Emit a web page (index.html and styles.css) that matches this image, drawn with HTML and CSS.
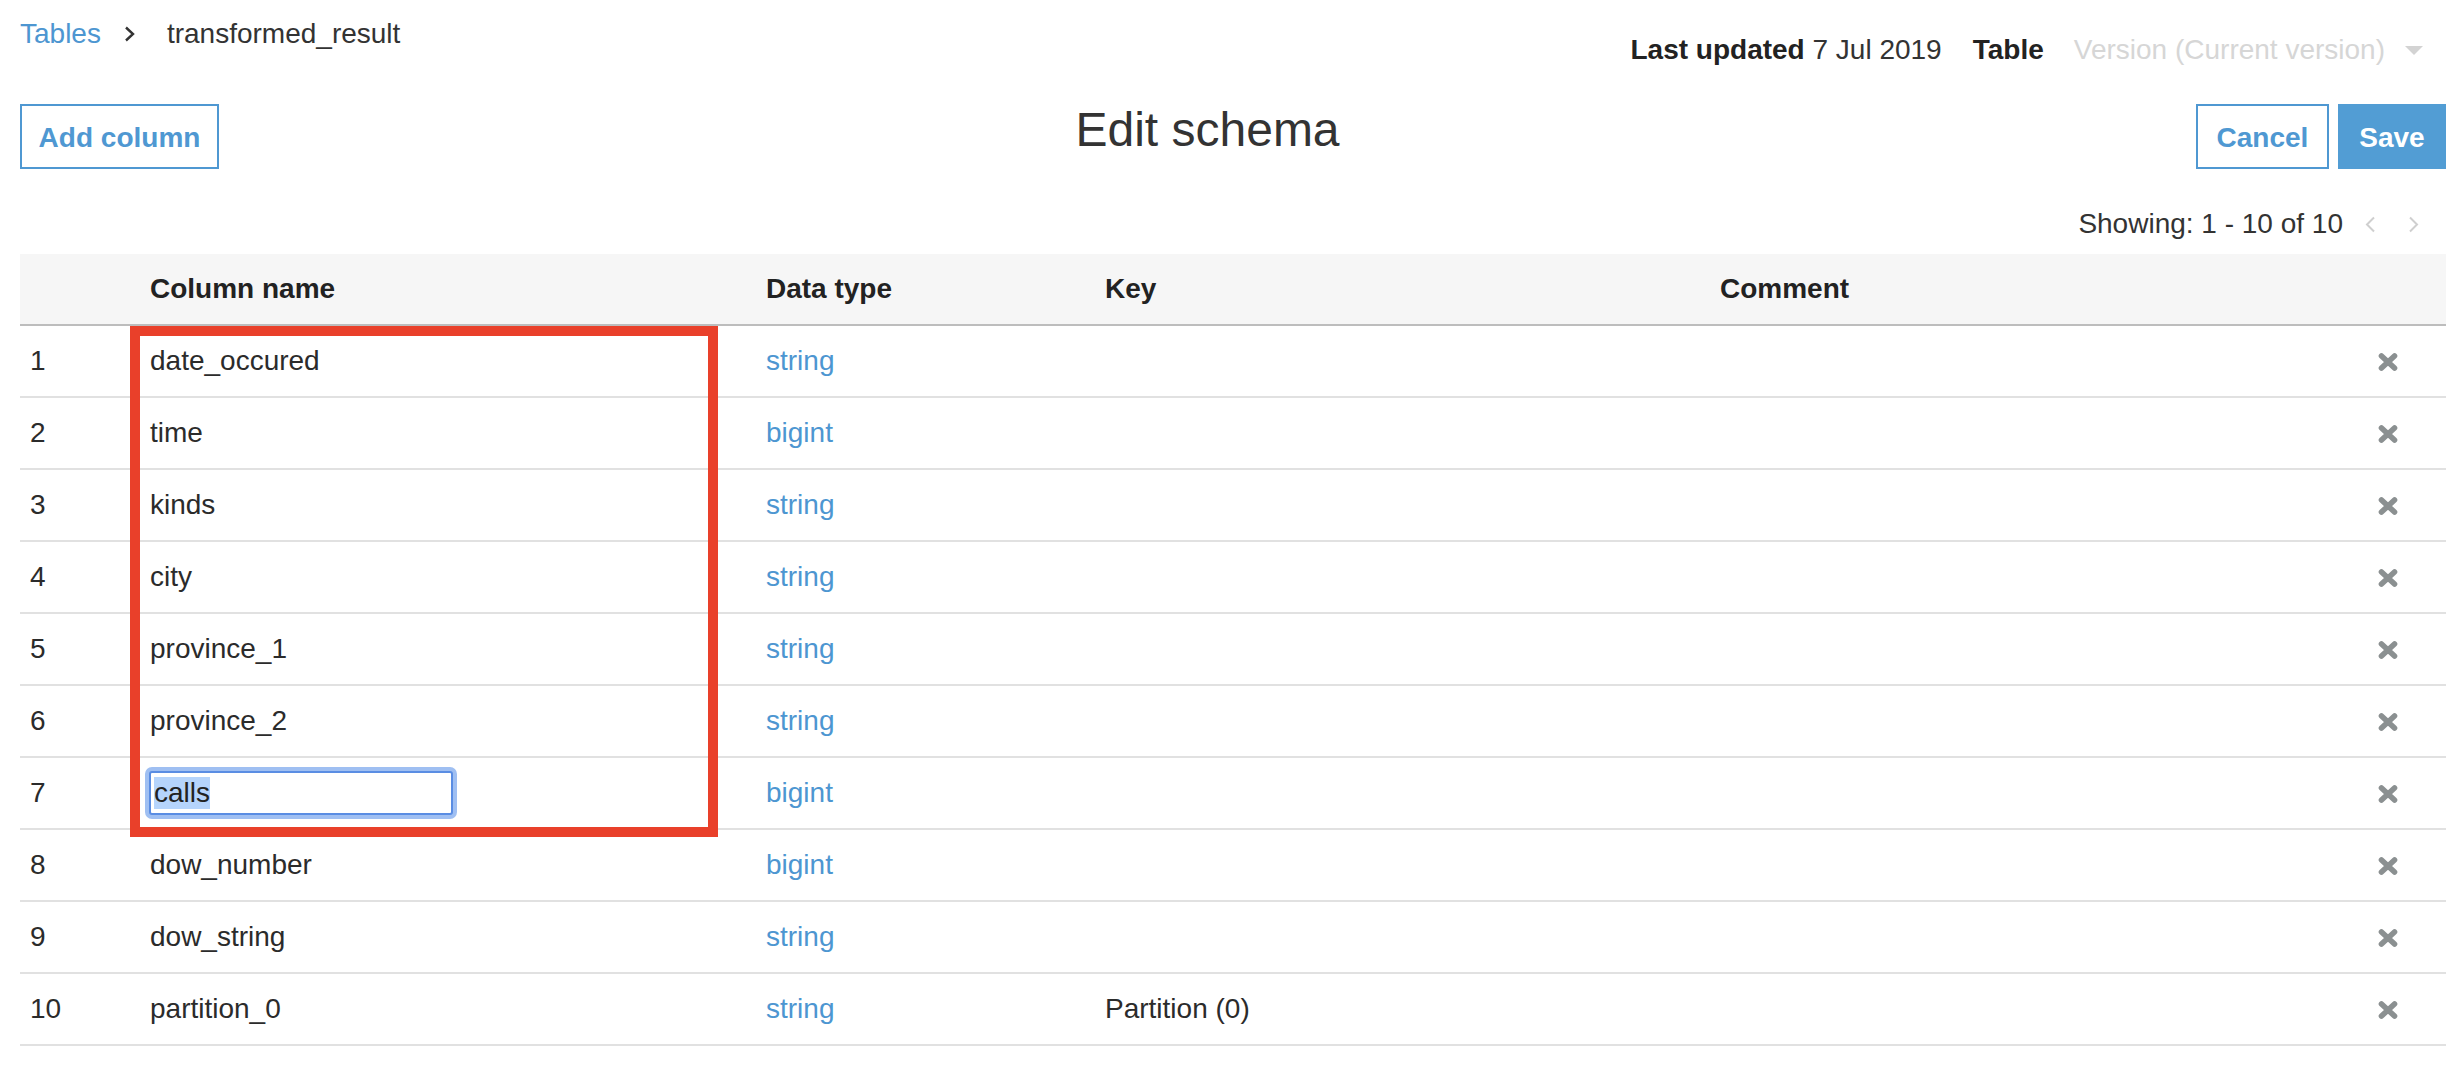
FILE: index.html
```html
<!DOCTYPE html>
<html lang="en">
<head>
<meta charset="utf-8">
<title>Edit schema</title>
<link rel="stylesheet" href="styles.css">
</head>
<body>
<div class="page">
  <header class="topbar">
    <nav class="breadcrumb">
      <a class="crumb-link">Tables</a>
      <svg class="crumb-sep" width="11" height="16" viewBox="0 0 11 16"><polyline points="2,1.5 9,8 2,14.5" fill="none" stroke="#333" stroke-width="2.4"/></svg>
      <span class="crumb-current">transformed_result</span>
    </nav>
    <div class="meta">
      <span class="meta-updated"><b>Last updated</b> 7 Jul 2019</span>
      <b class="meta-table">Table</b>
      <span class="meta-version">Version (Current version)</span>
      <svg class="meta-caret" width="18" height="9" viewBox="0 0 18 9"><polygon points="0,0 18,0 9,9" fill="#d3d3d3"/></svg>
    </div>
  </header>

  <div class="toolbar">
    <div class="tb-group">
      <button class="btn btn-outline btn-add">Add column</button>
    </div>
    <h1 class="title">Edit schema</h1>
    <div class="tb-group tb-right">
      <button class="btn btn-outline btn-cancel">Cancel</button>
      <button class="btn btn-primary btn-save">Save</button>
    </div>
  </div>

  <div class="pager">
    <span class="pager-text">Showing: 1 - 10 of 10</span>
    <svg class="pager-prev" width="12" height="17" viewBox="0 0 12 17"><polyline points="10,1.5 3,8.5 10,15.5" fill="none" stroke="#cfcfcf" stroke-width="2"/></svg>
    <svg class="pager-next" width="12" height="17" viewBox="0 0 12 17"><polyline points="2,1.5 9,8.5 2,15.5" fill="none" stroke="#cfcfcf" stroke-width="2"/></svg>
  </div>

  <div class="table-wrap">
    <table class="schema">
      <colgroup>
        <col class="c-num"><col class="c-name"><col class="c-type"><col class="c-key"><col class="c-comment"><col class="c-del">
      </colgroup>
      <thead>
        <tr><th></th><th>Column name</th><th>Data type</th><th>Key</th><th>Comment</th><th></th></tr>
      </thead>
      <tbody>
        <tr><td>1</td><td>date_occured</td><td class="type">string</td><td></td><td></td><td class="del"><svg class="x" width="22" height="20" viewBox="0 0 22 20"><path d="M4.5 4 L17.5 16 M17.5 4 L4.5 16" stroke="#8b9091" stroke-width="5.6" stroke-linecap="round"/></svg></td></tr>
        <tr><td>2</td><td>time</td><td class="type">bigint</td><td></td><td></td><td class="del"><svg class="x" width="22" height="20" viewBox="0 0 22 20"><path d="M4.5 4 L17.5 16 M17.5 4 L4.5 16" stroke="#8b9091" stroke-width="5.6" stroke-linecap="round"/></svg></td></tr>
        <tr><td>3</td><td>kinds</td><td class="type">string</td><td></td><td></td><td class="del"><svg class="x" width="22" height="20" viewBox="0 0 22 20"><path d="M4.5 4 L17.5 16 M17.5 4 L4.5 16" stroke="#8b9091" stroke-width="5.6" stroke-linecap="round"/></svg></td></tr>
        <tr><td>4</td><td>city</td><td class="type">string</td><td></td><td></td><td class="del"><svg class="x" width="22" height="20" viewBox="0 0 22 20"><path d="M4.5 4 L17.5 16 M17.5 4 L4.5 16" stroke="#8b9091" stroke-width="5.6" stroke-linecap="round"/></svg></td></tr>
        <tr><td>5</td><td>province_1</td><td class="type">string</td><td></td><td></td><td class="del"><svg class="x" width="22" height="20" viewBox="0 0 22 20"><path d="M4.5 4 L17.5 16 M17.5 4 L4.5 16" stroke="#8b9091" stroke-width="5.6" stroke-linecap="round"/></svg></td></tr>
        <tr><td>6</td><td>province_2</td><td class="type">string</td><td></td><td></td><td class="del"><svg class="x" width="22" height="20" viewBox="0 0 22 20"><path d="M4.5 4 L17.5 16 M17.5 4 L4.5 16" stroke="#8b9091" stroke-width="5.6" stroke-linecap="round"/></svg></td></tr>
        <tr><td>7</td><td><div class="edit-input"><span class="sel">calls</span></div></td><td class="type">bigint</td><td></td><td></td><td class="del"><svg class="x" width="22" height="20" viewBox="0 0 22 20"><path d="M4.5 4 L17.5 16 M17.5 4 L4.5 16" stroke="#8b9091" stroke-width="5.6" stroke-linecap="round"/></svg></td></tr>
        <tr><td>8</td><td>dow_number</td><td class="type">bigint</td><td></td><td></td><td class="del"><svg class="x" width="22" height="20" viewBox="0 0 22 20"><path d="M4.5 4 L17.5 16 M17.5 4 L4.5 16" stroke="#8b9091" stroke-width="5.6" stroke-linecap="round"/></svg></td></tr>
        <tr><td>9</td><td>dow_string</td><td class="type">string</td><td></td><td></td><td class="del"><svg class="x" width="22" height="20" viewBox="0 0 22 20"><path d="M4.5 4 L17.5 16 M17.5 4 L4.5 16" stroke="#8b9091" stroke-width="5.6" stroke-linecap="round"/></svg></td></tr>
        <tr><td>10</td><td>partition_0</td><td class="type">string</td><td>Partition (0)</td><td></td><td class="del"><svg class="x" width="22" height="20" viewBox="0 0 22 20"><path d="M4.5 4 L17.5 16 M17.5 4 L4.5 16" stroke="#8b9091" stroke-width="5.6" stroke-linecap="round"/></svg></td></tr>
      </tbody>
    </table>
    <div class="highlight-box"></div>
  </div>
</div>
</body>
</html>
```

FILE: styles.css
```css
html, body {
  margin: 0;
  padding: 0;
  background: #ffffff;
}

body {
  font-family: "Liberation Sans", Arial, Helvetica, sans-serif;
  font-size: 28px;
  line-height: 32px;
  color: #333333;
}

.page {
  padding: 0 8px 0 20px;
}

/* ---------- top bar ---------- */
.topbar {
  display: flex;
  justify-content: space-between;
  align-items: flex-start;
}

.breadcrumb {
  display: flex;
  align-items: center;
  padding-top: 18px;
}

.crumb-link {
  color: #4d96d1;
  cursor: pointer;
}

.crumb-sep {
  margin: 0 32px 0 23px;
  display: block;
}

.crumb-current {
  color: #333333;
}

.meta {
  display: flex;
  align-items: center;
  padding-top: 34px;
  padding-right: 23px;
}

.meta b {
  font-weight: bold;
  color: #222222;
}

.meta-updated {
  color: #333333;
}

.meta-table {
  margin-left: 31px;
}

.meta-version {
  margin-left: 30px;
  color: #d6d6d6;
}

.meta-caret {
  margin-left: 20px;
  display: block;
}

/* ---------- toolbar ---------- */
.toolbar {
  display: flex;
  align-items: flex-start;
  margin-top: 38px;
}

.tb-group {
  display: flex;
  flex: none;
}

.tb-right {
  gap: 9px;
}

.title {
  flex: 1;
  margin: -2px 0 0 0;
  text-align: center;
  font-size: 48px;
  line-height: 56px;
  font-weight: normal;
  color: #333333;
}

.btn {
  font-family: inherit;
  font-size: 28px;
  line-height: 32px;
  font-weight: bold;
  height: 65px;
  box-sizing: border-box;
  padding: 16px 0 13px 0;
  margin: 0;
  cursor: pointer;
  border-radius: 0;
}

.btn-outline {
  background: #ffffff;
  border: 2px solid #4f98d2;
  color: #4f98d2;
}

.btn-add {
  width: 199px;
}

.btn-cancel {
  width: 133px;
}

.btn-primary {
  background: #529dd4;
  border: 2px solid #529dd4;
  color: #ffffff;
}

.btn-save {
  width: 108px;
}

/* ---------- pager ---------- */
.pager {
  display: flex;
  justify-content: flex-end;
  align-items: center;
  margin-top: 39px;
  padding-right: 26px;
}

.pager-text {
  color: #333333;
}

.pager-prev {
  display: block;
  margin-left: 21px;
}

.pager-next {
  display: block;
  margin-left: 32px;
}

/* ---------- table ---------- */
.table-wrap {
  position: relative;
  margin-top: 14px;
}

.schema {
  width: 100%;
  table-layout: fixed;
  border-collapse: separate;
  border-spacing: 0;
}

.c-num { width: 120px; }
.c-name { width: 616px; }
.c-type { width: 339px; }
.c-key { width: 615px; }
.c-comment { width: 630px; }
.c-del { width: 106px; }

.schema th {
  height: 70px;
  padding: 0 10px;
  text-align: left;
  font-weight: bold;
  color: #222222;
  background: #f6f6f6;
  border-bottom: 2px solid #bdbdbd;
  vertical-align: middle;
}

.schema td {
  height: 70px;
  padding: 0 10px;
  border-bottom: 2px solid #e1e1e1;
  vertical-align: middle;
  white-space: nowrap;
  color: #2b2b2b;
}

.schema td.type {
  color: #4d96d1;
}

.schema td.del {
  padding: 0 0 0 37px;
}

.x {
  display: block;
  margin-top: 2px;
}

.edit-input {
  width: 304px;
  height: 44px;
  box-sizing: border-box;
  border: 2px solid #5a8de3;
  border-radius: 3px;
  box-shadow: 0 0 0 4px #9fbff2;
  padding: 4px 0 0 3px;
  margin-left: -1px;
  background: #ffffff;
}

.sel {
  display: inline-block;
  background: #b5d4fc;
  color: #222222;
  line-height: 32px;
}

/* annotation overlay */
.highlight-box {
  position: absolute;
  left: 110px;
  top: 72px;
  width: 588px;
  height: 511px;
  box-sizing: border-box;
  border: 10px solid #e9402a;
  pointer-events: none;
}
```
